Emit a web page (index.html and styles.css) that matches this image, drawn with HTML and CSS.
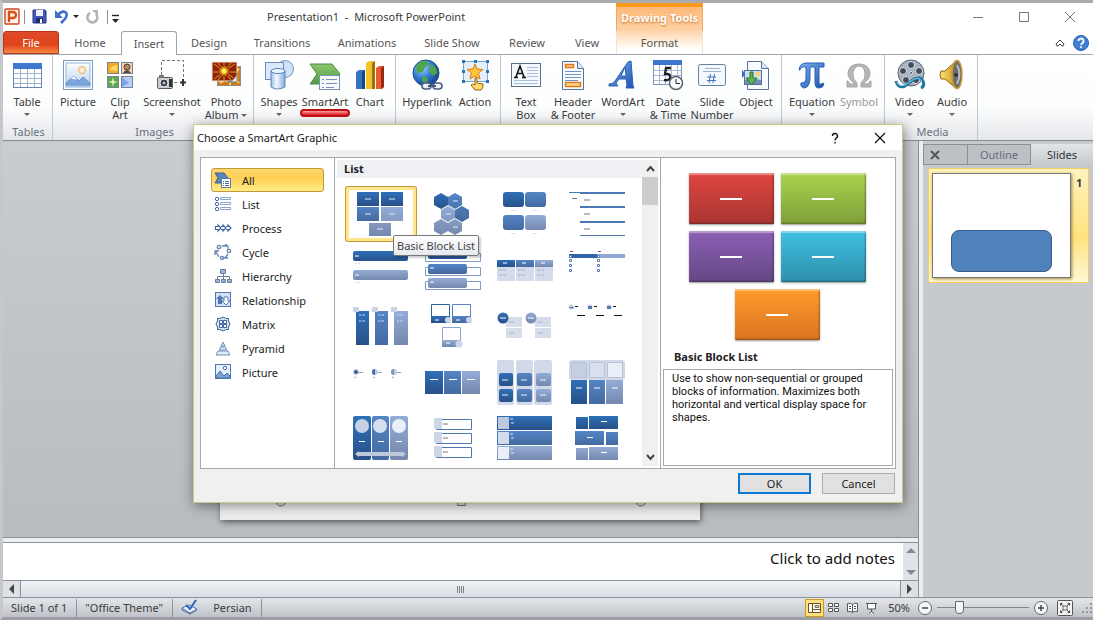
FILE: index.html
```html
<!DOCTYPE html>
<html lang="en">
<head>
<meta charset="utf-8">
<title>Presentation1 - Microsoft PowerPoint</title>
<link rel="stylesheet" href="styles.css">
</head>
<body>
<svg class="defs" width="0" height="0" aria-hidden="true">
  <defs>
    <linearGradient id="b1" x1="0" y1="0" x2="0" y2="1"><stop offset="0" stop-color="#2f70b8"/><stop offset="1" stop-color="#285089"/></linearGradient>
    <linearGradient id="b2" x1="0" y1="0" x2="0" y2="1"><stop offset="0" stop-color="#5485c6"/><stop offset="1" stop-color="#446a9f"/></linearGradient>
    <linearGradient id="b3" x1="0" y1="0" x2="0" y2="1"><stop offset="0" stop-color="#93acd8"/><stop offset="1" stop-color="#7588ad"/></linearGradient>
    <linearGradient id="sky" x1="0" y1="0" x2="0" y2="1"><stop offset="0" stop-color="#fdfeff"/><stop offset="1" stop-color="#b5d4f1"/></linearGradient>
    <linearGradient id="blue" x1="0" y1="0" x2="1" y2="1"><stop offset="0" stop-color="#7fb5f0"/><stop offset="1" stop-color="#1c4fae"/></linearGradient>
    <linearGradient id="green" x1="0" y1="0" x2="0" y2="1"><stop offset="0" stop-color="#8cc76c"/><stop offset="1" stop-color="#4f9a45"/></linearGradient>
    <linearGradient id="gold" x1="0" y1="0" x2="1" y2="0"><stop offset="0" stop-color="#ffe678"/><stop offset="1" stop-color="#c98b13"/></linearGradient>
    <linearGradient id="cyl" x1="0" y1="0" x2="1" y2="0"><stop offset="0" stop-color="#9dbfe8"/><stop offset=".4" stop-color="#f2f8ff"/><stop offset="1" stop-color="#86abdb"/></linearGradient>
    <radialGradient id="globe" cx=".35" cy=".3" r=".8"><stop offset="0" stop-color="#9fd6ff"/><stop offset=".5" stop-color="#2f79d0"/><stop offset="1" stop-color="#123a85"/></radialGradient>
    <radialGradient id="sun"><stop offset="0" stop-color="#ffe84a"/><stop offset=".5" stop-color="#e9911a"/><stop offset="1" stop-color="#8b2606"/></radialGradient>
  </defs>
</svg>
<div class="app">
  <header class="titlebar">
    <div class="quick">
      <svg width="116" height="20" viewBox="0 0 116 20" aria-hidden="true">
        <rect x="2" y="2" width="14" height="15" rx="1" fill="#fff3ec" stroke="#d0451b" stroke-width="1.4"/><path d="M6 15V5h4a3 3 0 0 1 0 6H7" fill="none" stroke="#d9501f" stroke-width="2.4"/>
        <path d="M21.500 3v14M104.500 3v14" stroke="#8d9299"/>
        <path d="M30 3h12l1 1v12H30z" fill="#4657b5" stroke="#27348b"/><rect x="33" y="3" width="7" height="6" fill="#eef1fb"/><rect x="33" y="11" width="7" height="5" fill="#222c66"/><rect x="37" y="12" width="2" height="4" fill="#fff"/>
        <path d="M55 8c5-6 12-3 7 4l-4 4" fill="none" stroke="#3f6fc4" stroke-width="2.6"/><path d="M52 3v8h8z" fill="#3f6fc4"/>
        <path d="M70 8h6l-3 3z" fill="#222"/>
        <path d="M87 6a5 5 0 1 0 6 1" fill="none" stroke="#b4b4b4" stroke-width="2.600"/><path d="M89 3h6v6z" fill="#b4b4b4"/>
        <path d="M109 8.500h7" stroke="#222" stroke-width="1.400"/><path d="M109 12h7l-3.500 4z" fill="#222"/>
      </svg>
    </div>
    <h1 class="title">Presentation1 &nbsp;-&nbsp; Microsoft PowerPoint</h1>
    <div class="context">Drawing Tools</div>
    <div class="winbtns">
      <button aria-label="Minimize"><svg width="12" height="12"><path d="M1 6.500h10" stroke="#777"/></svg></button>
      <button aria-label="Maximize"><svg width="12" height="12"><path d="M1.500 1.500h9v9h-9z" fill="none" stroke="#777"/></svg></button>
      <button aria-label="Close"><svg width="12" height="12"><path d="M1 1l10 10M11 1L1 11" stroke="#777"/></svg></button>
    </div>
  </header>
  <nav class="tabs">
    <button class="tab file">File</button>
    <button class="tab t62">Home</button>
    <button class="tab active">Insert</button>
    <button class="tab t64">Design</button>
    <button class="tab t82">Transitions</button>
    <button class="tab t88">Animations</button>
    <button class="tab t82">Slide Show</button>
    <button class="tab t68">Review</button>
    <button class="tab t50">View</button>
    <button class="tab format">Format</button>
    <div class="tabtools">
      <button aria-label="Minimize the ribbon"><svg width="12" height="12"><path d="M2 7l4-4 4 4-1 2H8L6 7 4 9H3z" fill="#fff" stroke="#444"/></svg></button>
      <button aria-label="Help"><svg width="18" height="18"><circle cx="9" cy="9" r="7.500" fill="#3f7fd6" stroke="#2a5db0"/><path d="M6.500 7a2.500 2.500 0 1 1 3.700 2.200Q9 10 9 11" fill="none" stroke="#fff" stroke-width="1.800"/><circle cx="9" cy="13" r="1.100" fill="#fff"/></svg></button>
    </div>
  </nav>
  <section class="ribbon" aria-label="Insert">
    <div class="group g-tables">
      <div class="items">
        <button class="item w44"><svg width="32" height="32"><rect x="2.500" y="4.500" width="28" height="24" fill="#fff" stroke="#6a86b3"/><rect x="2" y="4" width="29" height="6" fill="#3f78cf"/><path d="M3 14.500h27M3 19.500h27M3 24.500h27M9.500 10v18M16.500 10v18M23.500 10v18" stroke="#9fb2cf"/></svg><span>Table</span><i class="arrow"></i></button>
      </div>
      <div class="glabel">Tables</div>
    </div>
    <div class="group g-images">
      <div class="items">
        <button class="item w44"><svg width="32" height="32"><rect x="1.500" y="1.500" width="29" height="29" fill="#fff" stroke="#7d99be"/><rect x="4" y="4" width="24" height="24" fill="url(#sky)" stroke="#8db6e2"/><circle cx="20" cy="11" r="3.500" fill="#fff1d6" stroke="#e8a35a"/><path d="M4 24l8-7 5 5 4-4 7 6v2H4z" fill="#7ba7dc" stroke="#6b93c8"/><path d="M9 20l3-3 3 4-3-1z" fill="#fff"/></svg><span>Picture</span></button>
        <button class="item w40"><svg width="32" height="32"><rect x="3.500" y="3.500" width="11" height="11" fill="#f5a823" stroke="#78838f"/><path d="M5 11q4-5 8-5v6z" fill="#ffd964"/><rect x="17.500" y="3.500" width="11" height="11" fill="#f6d3b8" stroke="#78838f"/><circle cx="23" cy="8" r="3" fill="#c48152" stroke="#423f45"/><path d="M19 14q4-6 8 0z" fill="#58443e"/><rect x="3.500" y="17.500" width="11" height="11" fill="#5aa759" stroke="#78838f"/><path d="M9 18l1 4 4 1-4 1-1 4-1-4-4-1 4-1z" fill="#e5f3a8"/><rect x="17.500" y="17.500" width="11" height="11" fill="#b7cff6" stroke="#78838f"/><path d="M18 18l7 6-7 4z" fill="#7da5e6"/></svg><span>Clip<br>Art</span></button>
        <button class="item w64"><svg width="32" height="32"><path d="M5.500 16V1.500h22V20M18 23.500h4" fill="none" stroke="#6e757c" stroke-dasharray="3 2"/><path d="M24 23.500h6M27 20v7" stroke="#333" stroke-width="2"/><rect x="1.500" y="18.500" width="15" height="11" rx="1" fill="#c7cbd0" stroke="#555c63"/><rect x="3" y="16" width="5" height="3" fill="#777"/><circle cx="8" cy="24" r="4" fill="#383d45" stroke="#eee"/><circle cx="8" cy="24" r="1.500" fill="#a8c4e6"/><rect x="13" y="20" width="3" height="8" fill="#333"/></svg><span>Screenshot</span><i class="arrow"></i></button>
        <button class="item w44"><svg width="32" height="32"><rect x="7.500" y="7.500" width="23" height="19" fill="#cf7a16" stroke="#988"/><path d="M10 24l19-14M12 10l17 14M20 8v18" stroke="#f9d56d" stroke-width="2"/><rect x="2" y="3" width="25" height="19" fill="#8e2108" stroke="#f4e8d8"/><path d="M4 5l21 15M25 5L4 20M14 4v17M3 13h23M8 4l13 17M21 4L8 21" stroke="#e5a21c"/><circle cx="14" cy="12" r="6" fill="url(#sun)"/><circle cx="14" cy="12" r="2.500" fill="#ffee55"/><path d="M27 14v9h-9q7-1 9-9z" fill="#f5f5f5" stroke="#777"/></svg><span>Photo<br>Album <i class="arrow inline"></i></span></button>
      </div>
      <div class="glabel">Images</div>
    </div>
    <div class="group g-illus">
      <div class="items">
        <button class="item w48"><svg width="32" height="32"><circle cx="22" cy="10" r="8.500" fill="#cfe1f6" stroke="#7897c2"/><rect x="2.500" y="3.500" width="18" height="17" fill="#d9e8fa" stroke="#6d8dbb"/><path d="M8 12v16q6 4 14 0V12z" fill="url(#cyl)" stroke="#5f83b6"/><ellipse cx="15" cy="12" rx="7" ry="2.500" fill="#e7f2ff" stroke="#5f83b6"/></svg><span>Shapes</span><i class="arrow"></i></button>
        <button class="item w44"><svg width="32" height="32"><path d="M1 5h22l8 10-8 10H1l7-10z" fill="url(#green)" stroke="#4d8a48"/><rect x="10.500" y="16.500" width="20" height="14" fill="#f6faff" stroke="#7b93b4"/><path d="M17 20.500h11M17 24.500h11M17 28.500h8M13 20.500h2M13 24.500h2M13 28.500h2" stroke="#7890b6"/></svg><span>SmartArt</span><i class="redline"></i></button>
        <button class="item w46"><svg width="32" height="32"><path d="M2 13l3-2h6v19H2z" fill="#3277bd"/><path d="M8 13l3-2v19H8z" fill="#174b80"/><path d="M12 4l3-2h6v28h-9z" fill="#f4c42d"/><path d="M18 4l3-2v28h-3z" fill="#a66e08"/><path d="M22 9l3-2h5v21l-2 2h-6z" fill="#e75b31"/><path d="M27 9l3-2v21l-3 2z" fill="#9a2811"/></svg><span>Chart</span></button>
      </div>
    </div>
    <div class="group g-links">
      <div class="items">
        <button class="item w58"><svg width="32" height="32"><circle cx="15" cy="14" r="13" fill="url(#globe)" stroke="#1b4a85"/><path d="M5 7q5-6 11-5l2 3-4 3-2 5-6 1zM20 5q6 3 6 9l-4 3-4-5zM11 17l6 2-1 6q-6-1-5-8z" fill="#4fa54b"/><rect x="11" y="24" width="9" height="6" rx="3" fill="#eef3fa" stroke="#485d7e" stroke-width="1.600"/><rect x="22" y="24" width="9" height="6" rx="3" fill="#eef3fa" stroke="#485d7e" stroke-width="1.600"/><path d="M17 27h8" stroke="#485d7e" stroke-width="2"/></svg><span>Hyperlink</span></button>
        <button class="item w38"><svg width="32" height="32"><rect x="4.500" y="2.500" width="24" height="20" fill="#e4effc" stroke="#7aa6d4"/><path d="M3 1h3v3H3zM15 1h3v3h-3zM27 1h3v3h-3zM3 11h3v3H3zM27 11h3v3h-3zM3 21h3v3H3zM27 21h3v3h-3z" fill="#2377be"/><path d="M16 5l2 5 6 .5-4.500 3.500 1.500 6-5-3-5 3 1.500-6L8 10.500l6-.5z" fill="#ffc33c" stroke="#dd7c12"/><path d="M16 19q2-1 2 2v3l6 1v3l-2 3h-6l-4-5q1-2 4 0z" fill="#ffd96a" stroke="#99610c"/></svg><span>Action</span></button>
      </div>
    </div>
    <div class="group g-text">
      <div class="items">
        <button class="item w44"><svg width="32" height="32"><rect x="1.500" y="4.500" width="29" height="23" fill="#f5f9fe" stroke="#5e7189"/><path d="M6 18l4-11 4 11M7.500 14.500h5M4 18.500h4M12 18.500h4" stroke="#111" stroke-width="1.600" fill="none"/><path d="M17 8.500h11M17 11.500h11M17 14.500h11M17 17.500h11M4 21.500h24M4 24.500h24" stroke="#a7c0dd"/></svg><span>Text<br>Box</span></button>
        <button class="item w50"><svg width="32" height="32"><path d="M5.500 2.500h15l6 7v21h-21z" fill="#f9fcff" stroke="#51739f"/><path d="M20.500 2.500v7h6" fill="#dae8fa" stroke="#51739f"/><path d="M8.500 5.500h8v3h-8zM8.500 23.500h15v4h-15z" fill="#ffd69b" stroke="#e17715" stroke-width="1.500"/><path d="M8 12.500h16M8 15.500h16M8 18.500h16M8 21.500h13" stroke="#6f94c4"/></svg><span>Header<br>&amp; Footer</span></button>
        <button class="item w50"><svg width="32" height="32"><path d="M2 25q4 0 6-3L21 3l3-1 2 25 1 2h-8l1-3-1-6h-7q-4 4-2 6l1 1H2zM14 17h5l-1-9z" fill="url(#blue)" stroke="#2c62b5"/></svg><span>WordArt</span><i class="arrow"></i></button>
        <button class="item w40"><svg width="32" height="32"><rect x="1.500" y="1.500" width="28" height="24" fill="#fff" stroke="#8096b5"/><rect x="1" y="1" width="29" height="5" fill="#3c78cf"/><path d="M2 11.500h27M2 16.500h27M2 21.500h27M7.500 6v19M13.500 6v19M19.500 6v19M25.500 6v19" stroke="#a7b8d1"/><path d="M19 9h-5l-1 6q6-1 5 4-1 3-6 2" fill="none" stroke="#222" stroke-width="2.300"/><circle cx="24" cy="24" r="6.500" fill="#f9fbfd" stroke="#5c6670" stroke-width="1.500"/><path d="M24 20v4.500h4" fill="none" stroke="#222"/></svg><span>Date<br>&amp; Time</span></button>
        <button class="item w48"><svg width="32" height="32"><rect x="2.500" y="5.500" width="27" height="21" rx="2" fill="#f5f9fe" stroke="#6a7f9c"/><path d="M9 9.500h15M7 12.500h18" stroke="#9db5d4"/><path d="M14.500 15l-1.500 9M18.500 15l-1.500 9M11 18h9M11 21.500h9" stroke="#4273bb"/></svg><span>Slide<br>Number</span></button>
        <button class="item w40"><svg width="32" height="32"><path d="M7.500 2.500h14l7 7v21h-21z" fill="#f8fbff" stroke="#55749c"/><path d="M21.500 2.500v7h7" fill="#d7e6f9" stroke="#55749c"/><path d="M2 11l4 4-4 4z" fill="#2d6dcb"/><rect x="4.500" y="11.500" width="17" height="14" fill="#cfe0f6" stroke="#53739e"/><circle cx="18" cy="15" r="2.500" fill="#f3d27f"/><path d="M5 21l5-2 11 2v4H5z" fill="#6f8db0"/><path d="M10 13h3v6h4l-5.500 7L6 19h4z" fill="#5fb257" stroke="#25752a"/></svg><span>Object</span></button>
      </div>
    </div>
    <div class="group g-symbols">
      <div class="items">
        <button class="item w52"><svg width="32" height="32"><path d="M3 11q1-7 7-7h18v4h-5v15q0 4 4 1l1 1q-1 4-5 4-4 0-4-5V8h-5v12q-1 9-6 9-4-1-3-5 5 0 5-5V8Q5 7 4 11z" fill="url(#blue)" stroke="#2860b5"/></svg><span>Equation</span><i class="arrow"></i></button>
        <button class="item w42"><svg width="32" height="32"><path d="M4 22h1q1 3 3 3h4Q5 20 5 14 6 5 16 5t11 9q0 6-7 11h4q2 0 3-3h1v6H18v-4q5-4 4-10-1-7-6-7t-6 7q-1 6 4 10v4H4z" fill="#b4b6b9" stroke="#a4a4a4"/></svg><span class="off">Symbol</span></button>
      </div>
    </div>
    <div class="group g-media">
      <div class="items">
        <button class="item w43"><svg width="32" height="32"><circle cx="17" cy="14" r="13" fill="#a9b3be" stroke="#57626e"/><g fill="#3f4c5d" stroke="#dde3ea"><circle cx="17" cy="6" r="3.500"/><circle cx="9" cy="12" r="3.500"/><circle cx="25" cy="12" r="3.500"/><circle cx="12" cy="21" r="3.500"/><circle cx="22" cy="21" r="3.500"/><circle cx="17" cy="14" r="1.500"/></g><path d="M2 22q2 8 9 5l9-7q7-3 9 2t-2 7" fill="none" stroke="#2276a7" stroke-width="3"/><path d="M3 23q2 5 8 3l9-6q6-2 8 3" fill="none" stroke="#8bcdea"/></svg><span>Video</span><i class="arrow"></i></button>
        <button class="item w42"><svg width="32" height="32"><path d="M5 12h4L21 1v29L9 20H5q-2-4 0-8z" fill="url(#gold)" stroke="#8f620d"/><ellipse cx="21" cy="15.500" rx="5" ry="14" fill="#6b6d70" stroke="#c89a35" stroke-width="1.500"/><path d="M21 6q5 9 0 19" fill="none" stroke="#bbb" stroke-width="2"/><circle cx="20" cy="16" r="2" fill="#333"/></svg><span>Audio</span><i class="arrow"></i></button>
      </div>
      <div class="glabel">Media</div>
    </div>
  </section>
  <div class="workspace">
    <main class="editor">
      <div class="canvas"><div class="slide"><svg width="480" height="24"><g fill="#e8eef0" stroke="#6c7a82"><circle cx="61" cy="5" r="5"/><path d="M237.500 .5h8v9h-8z"/><circle cx="421" cy="5" r="5"/></g></svg></div></div>
      <div class="notes">
        <textarea class="notetext" aria-label="Notes" placeholder="Click to add notes"></textarea>
        <div class="nscroll"><button aria-label="Notes up"><i class="tri up"></i></button><button aria-label="Notes down"><i class="tri down"></i></button></div>
      </div>
      <div class="hscroll"><button aria-label="Scroll left"><i class="tri left"></i></button><div class="hthumb"><svg width="8" height="7"><path d="M.5 0v7M2.500 0v7M4.500 0v7M6.500 0v7" stroke="#7d8289"/></svg></div><button aria-label="Scroll right"><i class="tri right"></i></button></div>
    </main>
    <aside class="side">
      <div class="sidetabs">
        <button class="sclose" aria-label="Close pane"><svg width="10" height="10"><path d="M1 1l8 8M9 1L1 9" stroke="#555" stroke-width="2"/></svg></button>
        <button class="outline">Outline</button>
        <button class="slides">Slides</button>
      </div>
      <div class="card"><div class="mini"><div class="shape"></div></div><b>1</b></div>
    </aside>
  </div>
  <footer class="status">
    <span class="cell">Slide 1 of 1</span><span class="cell">"Office Theme"</span>
    <span class="cell lang"><svg width="18" height="16"><path d="M1 9l7-3 8 4-7 4z" fill="#eef3fb" stroke="#5571a8"/><path d="M1 9v2l8 4v-2M9 15l7-4" fill="none" stroke="#5571a8"/><path d="M5 6l4 4 6-9" fill="none" stroke="#2e62c0" stroke-width="2"/></svg>Persian</span>
    <div class="views">
      <button class="on" aria-label="Normal"><svg width="13" height="12"><path d="M.5 1.500h12v9H.5zM4.500 1.500v9M4.500 7.500h8" fill="#fff" stroke="#6b5617"/><path d="M7 3.500h4v2H7z" fill="#f6d06c" stroke="#777"/></svg></button>
      <button aria-label="Slide Sorter"><svg width="13" height="12"><path d="M1.500 1.500h4v3h-4zM7.500 1.500h4v3h-4zM1.500 6.500h4v3h-4zM7.500 6.500h4v3h-4z" fill="#fff" stroke="#555"/></svg></button>
      <button aria-label="Reading View"><svg width="13" height="12"><path d="M1.500 1.500q3-1 5 1 2-2 5-1v8q-3-1-5 1-2-2-5-1zM6.500 2v8M3 4.500h2M3 6.500h2M8 4.500h2M8 6.500h2" fill="#fff" stroke="#555"/></svg></button>
      <button aria-label="Slide Show"><svg width="13" height="12"><path d="M1 1.500h11M2.500 2v5h8V2M6.500 7v3M4 11.500l2.500-2 2.500 2" fill="#fff" stroke="#555"/></svg></button>
    </div>
    <span class="pct">50%</span>
    <button class="round" aria-label="Zoom out"><svg width="16" height="16"><circle cx="8" cy="8" r="6.500" fill="#f4f6f8" stroke="#656b72"/><path d="M5 8h6" stroke="#444" stroke-width="1.500"/></svg></button>
    <input class="zoom" type="range" min="0" max="100" value="22" aria-label="Zoom">
    <button class="round" aria-label="Zoom in"><svg width="16" height="16"><circle cx="8" cy="8" r="6.500" fill="#f4f6f8" stroke="#656b72"/><path d="M5 8h6M8 5v6" stroke="#444" stroke-width="1.500"/></svg></button>
    <button class="fit" aria-label="Fit slide"><svg width="16" height="16"><rect x=".5" y=".5" width="15" height="15" rx="1" fill="#f2f4f6" stroke="#555"/><path d="M3 3h3L3 6zM13 3v3l-3-3zM3 13v-3l3 3zM13 13h-3l3-3z" fill="#444"/><path d="M3.500 3.500l9 9M12.500 3.500l-9 9" stroke="#555"/><rect x="6" y="6" width="4" height="4" fill="#f2f4f6" stroke="#666"/></svg></button>
    <svg class="grip" width="12" height="12"><path d="M9 1h2v2H9zM9 5h2v2H9zM9 9h2v2H9zM5 5h2v2H5zM5 9h2v2H5zM1 9h2v2H1z" fill="#9298a0"/></svg>
  </footer>
</div>
<div class="dialog" role="dialog" aria-labelledby="dlg-title">
  <div class="dhead"><h2 id="dlg-title">Choose a SmartArt Graphic</h2><button aria-label="Help"><svg width="10" height="12"><path d="M2.500 4a2.500 2.500 0 1 1 3.700 2.200Q5 7 5 8.500M5 10v1.500" fill="none" stroke="#111" stroke-width="1.400"/></svg></button><button aria-label="Close dialog"><svg width="12" height="12"><path d="M1 1l10 10M11 1L1 11" stroke="#111" stroke-width="1.200"/></svg></button></div>
  <div class="dbody">
    <div class="cats">
      <button class="cat sel"><svg width="18" height="16"><path d="M1 1h9l4 5-4 5H1l3-5z" fill="#5e82ba" stroke="#3c619c"/><rect x="7.500" y="6.500" width="9" height="9" fill="#fff" stroke="#5e7eb1"/><path d="M9 9.500h1M11 9.500h4M9 11.500h1M11 11.500h4M9 13.500h1M11 13.500h4" stroke="#41679f"/></svg>All</button>
      <button class="cat"><svg width="18" height="16"><g fill="#fff" stroke="#4a6ca5"><circle cx="3" cy="3" r="1.700"/><circle cx="3" cy="8" r="1.700"/><circle cx="3" cy="13" r="1.700"/><path stroke="#88a3cc" d="M6.500 1.500h10v2h-10zM6.500 6.500h10v2h-10zM6.500 11.500h10v2h-10z"/></g></svg>List</button>
      <button class="cat"><svg width="18" height="16"><g fill="#fff" stroke="#4064a1" stroke-width="1.200"><path d="M1.500 6.500H4V5l3 3-3 3V9.500H1.500zM7 6.500h2V5l3 3-3 3V9.500H7M12 6.500h2V5l3 3-3 3V9.500h-2"/></g></svg>Process</button>
      <button class="cat"><svg width="18" height="16"><g fill="none" stroke="#6481b0" stroke-width="1.300"><circle cx="5" cy="3" r="1.700"/><circle cx="15" cy="7" r="1.700"/><circle cx="8" cy="14" r="1.500"/><path d="M8 2h5M11 0l3 2v3M14 10l-3 4M14 14h-4M5 13L2 8M1 11V7h4"/></g></svg>Cycle</button>
      <button class="cat"><svg width="18" height="16"><g fill="#9db3d5" stroke="#667f9f"><path d="M6.500 1.500h5v4h-5zM1.500 11.500h4v3h-4zM7.500 11.500h4v3h-4zM13.500 11.500h4v3h-4z"/><path fill="none" d="M9.500 6v5M3.500 11V8.500h12V11"/></g></svg>Hierarchy</button>
      <button class="cat"><svg width="18" height="16"><rect x="1.500" y=".5" width="15" height="14" fill="#d4e2f4" stroke="#5278b2"/><path d="M6 3l4 4H8v5H4V7H2z" fill="#5278b2"/><path d="M10 5h4v4h2l-4 4-4-4h2z" fill="#fff" stroke="#5278b2"/></svg>Relationship</button>
      <button class="cat"><svg width="18" height="16"><path d="M6 2.500q3-3 6 0h2.500V5q3 3 0 6v2.500H12q-3 3-6 0H3.500V11q-3-3 0-6V2.500z" fill="#d7e2f1" stroke="#3d619c"/><path d="M5.500 4.500h3v3h-3zM9.500 4.500h3v3h-3zM5.500 8.500h3v3h-3zM9.500 8.500h3v3h-3z" fill="#fff" stroke="#3d619c"/></svg>Matrix</button>
      <button class="cat"><svg width="18" height="16"><path d="M9 2l2 4H7zM6.500 7h5l1 3h-7zM4 11h10l2 4H2z" fill="#e3ebf6" stroke="#6e8fc0"/></svg>Pyramid</button>
      <button class="cat"><svg width="18" height="16"><rect x="1.500" y=".5" width="15" height="14" fill="#e5eefb" stroke="#5278b2"/><circle cx="11" cy="4" r="1.700" fill="#fff" stroke="#4570b2"/><path d="M2 12l4-5 4 5 3-3 3 3v2H2z" fill="#7e9fd0" stroke="#4570b2"/></svg>Picture</button>
    </div>
    <div class="gallery">
      <h3>List</h3>
      <div class="thumbs">
        <button class="thumb sel" aria-label="Basic Block List"><svg viewBox="0 0 72 56"><path d="M12 6h22v14H12zM36 6h22v14H36z" fill="url(#b1)"/><path d="M12 21h22v14H12zM36 21h22v14H36z" fill="url(#b2)"/><path d="M36 21h22v14H36zM24 37h22v13H24z" fill="url(#b3)"/><path d="M20 13h6M44 13h6M20 28h6M44 28h6M32 43h6" stroke="#e5ecf7"/></svg></button>
        <button class="thumb" aria-label="Alternating Hexagons"><svg viewBox="0 0 72 56"><path d="M24 7l7 4v8l-7 4-7-4v-8z" fill="url(#b1)"/><path d="M38 7l7 4v8l-7 4-7-4v-8zM45 20l7 4v8l-7 4-7-4v-8z" fill="url(#b2)"/><path d="M31 20l7 4v8l-7 4-7-4v-8zM24 33l7 4v8l-7 4-7-4v-8zM38 33l7 4v8l-7 4-7-4v-8z" fill="url(#b3)"/><path d="M36 15h5M29 28h5M36 41h5" stroke="#dfe8f5"/></svg></button>
        <button class="thumb" aria-label="Picture Caption List"><svg viewBox="0 0 72 56"><rect x="14" y="6" width="21" height="15" rx="3" fill="url(#b1)"/><rect x="36" y="6" width="21" height="15" rx="3" fill="url(#b2)"/><rect x="14" y="29" width="21" height="15" rx="3" fill="url(#b2)"/><rect x="36" y="29" width="21" height="15" rx="3" fill="url(#b3)"/><path d="M22 24.500h4M44 24.500h4M22 47.500h4M44 47.500h4" stroke="#dde"/></svg></button>
        <button class="thumb" aria-label="Lined List"><svg viewBox="0 0 72 56"><path d="M8 6h12v1H8zM19 6h45v2H19zM19 20h45v2H19zM19 35h45v2H19zM19 49h45v1H19z" fill="#4c78b3"/><path d="M23 14h6M23 28h6M23 43h6M11 12.500h5" stroke="#777"/></svg></button>

        <button class="thumb" aria-label="Vertical Bullet List"><svg viewBox="0 0 72 56"><rect x="8" y="9" width="55" height="10" rx="2" fill="url(#b1)"/><rect x="8" y="28" width="55" height="10" rx="2" fill="url(#b3)"/><path d="M10 14h4M10 33h4" stroke="#fff"/><path d="M10 21.500h6M10 40.500h6" stroke="#d7dce6" stroke-dasharray="2 1"/></svg></button>
        <button class="thumb" aria-label="Vertical Box List"><svg viewBox="0 0 72 56"><path d="M8.500 11.500h55v8h-55zM8.500 25.500h55v8h-55zM8.500 39.500h55v8h-55z" fill="#fff" stroke="#7f9bc7"/><rect x="11" y="7" width="39" height="10" rx="2" fill="url(#b1)"/><rect x="11" y="22" width="39" height="10" rx="2" fill="url(#b2)"/><rect x="11" y="36" width="39" height="10" rx="2" fill="url(#b3)"/><path d="M13 26h4M13 40h4" stroke="#fff"/></svg></button>
        <button class="thumb" aria-label="Horizontal Bullet List"><svg viewBox="0 0 72 56"><path d="M8 25h18v14H8zM27 25h18v14H27zM46 25h18v14H46z" fill="#d4dbea"/><path d="M8 18h18v7H8z" fill="url(#b1)"/><path d="M27 18h18v7H27z" fill="url(#b2)"/><path d="M46 18h18v7H46z" fill="url(#b3)"/><path d="M14 21h4M33 21h4M52 21h4" stroke="#fff"/><path d="M10 28h7M29 28h7M48 28h7M10 33h7M29 33h7M48 33h7" stroke="#a6b2c8" stroke-dasharray="3 1"/></svg></button>
        <button class="thumb" aria-label="Square Accent List"><svg viewBox="0 0 72 56"><path d="M8 12h28v4H8z" fill="#2f65a8"/><path d="M36 12h28v4H36z" fill="#8fa9d4"/><path d="M9 9.500h3M37 9.500h3" stroke="#666"/><path d="M8.500 13.500h2v2h-2zM8.500 17.500h2v2h-2zM8.500 22.500h2v2h-2zM8.500 27.500h2v2h-2zM36.500 13.500h2v2h-2zM36.500 17.500h2v2h-2zM36.500 22.500h2v2h-2zM36.500 27.500h2v2h-2z" fill="#fff" stroke="#5d7fb5"/></svg></button>

        <button class="thumb" aria-label="Picture Accent List"><svg viewBox="0 0 72 56"><path d="M11 13h13v34H11z" fill="url(#b1)"/><path d="M30 13h13v34H30z" fill="url(#b2)"/><path d="M49 13h14v34H49z" fill="url(#b3)"/><path d="M8 9h6v5H8zM27 9h6v5h-6zM46 9h6v5h-6z" fill="#cbd4e4"/><path d="M14 17h6M14 23h6M33 17h6M33 23h6M52 17h6M52 23h6" stroke="#c7d6ee" stroke-dasharray="2 1 3 1"/></svg></button>
        <button class="thumb" aria-label="Bending Picture Accent List"><svg viewBox="0 0 72 56"><path d="M14.500 6.500h18v18h-18z" fill="#fff" stroke="#30619f"/><path d="M35.500 6.500h18v18h-18z" fill="#fff" stroke="#5b83be"/><path d="M25.500 29.500h18v19h-18z" fill="#fff" stroke="#8fa6cf"/><path d="M14 18h19v7H14z" fill="url(#b1)"/><path d="M35 18h19v7H35z" fill="url(#b2)"/><path d="M25 42h19v7H25z" fill="url(#b3)"/><path d="M18 22h4M39 22h4M29 45h4" stroke="#fff"/><g fill="#cbd6e9"><circle cx="31" cy="22" r="3"/><circle cx="52" cy="22" r="3"/><circle cx="42" cy="46" r="3.500"/></g></svg></button>
        <button class="thumb" aria-label="Stacked List"><svg viewBox="0 0 72 56"><path d="M17 19h16v10H17zM17 30h16v10H17zM46 19h16v10H46zM46 30h16v10H46z" fill="#d5dcea"/><circle cx="14" cy="20" r="5.500" fill="url(#b1)"/><circle cx="42" cy="20" r="5.500" fill="url(#b3)"/><path d="M11 20h6M39 20h6" stroke="#fff"/><path d="M20 24h5M20 35h5M49 24h5M49 35h5" stroke="#a8b5ca"/></svg></button>
        <button class="thumb" aria-label="Increasing Circle Process"><svg viewBox="0 0 72 56"><g fill="#c2d0e6"><circle cx="10" cy="9" r="2.500"/><circle cx="29" cy="9" r="2.500"/><circle cx="48" cy="9" r="2.500"/></g><path d="M8 9h5q-1 3-5 0M27 8h4v3h-4M46 8h4v3h-4" fill="#567cae"/><path d="M14 8.500h3M33 8.500h3M52 8.500h3M16 17.500h8M35 17.500h8M53 17.500h8" stroke="#111"/></svg></button>

        <button class="thumb" aria-label="Pie Process"><svg viewBox="0 0 72 56"><g fill="#bdcae0"><circle cx="11" cy="18" r="3"/><circle cx="30" cy="18" r="3"/><circle cx="49" cy="18" r="3"/></g><circle cx="11" cy="18" r="1.800" fill="#244f89"/><path d="M30 15v6a3 3 0 0 1 0-6" fill="#456da8"/><path d="M49 15v6a3 3 0 0 1 0-6" fill="#7b94bd"/><path d="M14 18.500h4M33 18.500h4M52 18.500h4M9 24l2-1M28 24l2-1M47 24l2-1" stroke="#9ba3b0"/></svg></button>
        <button class="thumb" aria-label="Detailed Process"><svg viewBox="0 0 72 56"><path d="M8 17h18v23H8z" fill="url(#b1)"/><path d="M27 17h17v23H27z" fill="url(#b2)"/><path d="M45 17h18v23H45z" fill="url(#b3)"/><path d="M13 25.500h8M32 25.500h8M50 25.500h8" stroke="#fff"/></svg></button>
        <button class="thumb" aria-label="Grouped List"><svg viewBox="0 0 72 56"><g fill="#d2dae9"><rect x="8" y="6" width="17" height="45" rx="2"/><rect x="27" y="6" width="17" height="45" rx="2"/><rect x="45" y="6" width="18" height="45" rx="2"/></g><g fill="url(#b1)"><rect x="10" y="19" width="14" height="13" rx="2"/><rect x="10" y="35" width="14" height="13" rx="2"/></g><g fill="url(#b2)"><rect x="28" y="19" width="15" height="13" rx="2"/><rect x="28" y="35" width="15" height="13" rx="2"/></g><g fill="url(#b3)"><rect x="47" y="19" width="15" height="13" rx="2"/><rect x="47" y="35" width="15" height="13" rx="2"/></g><path d="M13 26h6M13 41h6M32 26h6M32 41h6M51 26h6M51 41h6" stroke="#e8effa"/></svg></button>
        <button class="thumb" aria-label="Horizontal Picture List"><svg viewBox="0 0 72 56"><rect x="8" y="6" width="56" height="20" rx="3" fill="#d1d9e8"/><path d="M10 26h16v24H10z" fill="url(#b1)"/><path d="M28 26h16v24H28z" fill="url(#b2)"/><path d="M45 26h17v24H45z" fill="url(#b3)"/><g stroke="#b7c2d7"><path d="M10.500 8.500h15v15h-15z" fill="#c5cfe2"/><path d="M28.500 8.500h15v15h-15z" fill="#d9dfec"/><path d="M46.500 8.500h15v15h-15z" fill="#eaeef6"/></g><path d="M15 34h6M33 34h6M51 34h6" stroke="#fff"/></svg></button>

        <button class="thumb" aria-label="Continuous Picture List"><svg viewBox="0 0 72 56"><rect x="8" y="6" width="18" height="44" rx="2" fill="url(#b1)"/><rect x="27" y="6" width="17" height="44" rx="2" fill="url(#b2)"/><rect x="45" y="6" width="18" height="44" rx="2" fill="url(#b3)"/><circle cx="17" cy="16" r="7" fill="#c5d0e4"/><circle cx="35" cy="16" r="7" fill="#d5deed"/><circle cx="54" cy="16" r="7" fill="#eaeff8"/><path d="M14 31.500h6M33 31.500h6M51 31.500h6" stroke="#fff"/><path d="M10 44l4-3v1h43v-1l4 3-4 3v-1H14v1z" fill="#bcc8dc"/></svg></button>
        <button class="thumb" aria-label="Vertical Picture List"><svg viewBox="0 0 72 56"><path d="M19.500 9.500h35v10h-35zM19.500 23.500h35v10h-35zM19.500 37.500h35v10h-35z" fill="#fff" stroke="#4f78b3"/><path d="M17 8h8v11h-8zM17 22h8v11h-8zM17 36h8v11h-8z" fill="#ccd6e7"/><path d="M26 14h5M26 28h5M26 42h5" stroke="#777"/></svg></button>
        <button class="thumb" aria-label="Vertical Picture Accent List"><svg viewBox="0 0 72 56"><path d="M8 6h55v14H8z" fill="url(#b1)"/><path d="M8 21h55v14H8z" fill="url(#b2)"/><path d="M8 36h55v14H8z" fill="url(#b3)"/><path d="M9 7h11v12H9z" fill="#bcc9df"/><path d="M9 22h11v12H9z" fill="#d2dbea"/><path d="M9 37h11v12H9z" fill="#e9eef7"/><path d="M21 9h3M22 13h3M21 24h3M22 28h3M21 39h3M22 43h3" stroke="#dae5f6"/></svg></button>
        <button class="thumb" aria-label="Vertical Block List"><svg viewBox="0 0 72 56"><path d="M15 7h12v12H15zM28 6h29v13H28z" fill="url(#b1)"/><path d="M14 21h29v14H14zM45 22h12v13H45z" fill="url(#b2)"/><path d="M15 38h12v12H15zM28 37h29v13H28z" fill="url(#b3)"/><path d="M40 11.500h6M26 27.500h6M40 42.500h6" stroke="#fff"/></svg></button>
      </div>
      <span class="tip" role="tooltip">Basic Block List</span>
    </div>
    <div class="gscroll"><button aria-label="Scroll up"><svg width="9" height="7"><path d="M1 6l3.500-4L8 6" fill="none" stroke="#444" stroke-width="2"/></svg></button><div class="gthumb"></div><button aria-label="Scroll down"><svg width="9" height="7"><path d="M1 1l3.500 4L8 1" fill="none" stroke="#444" stroke-width="2"/></svg></button></div>
    <div class="preview">
      <div class="blocks"><i class="blk red"></i><i class="blk lime"></i><i class="blk purple"></i><i class="blk cyan"></i><i class="blk orange"></i></div>
      <h3>Basic Block List</h3>
      <p>Use to show non-sequential or grouped blocks of information. Maximizes both horizontal and vertical display space for shapes.</p>
    </div>
  </div>
  <div class="dfoot"><button class="ok">OK</button><button>Cancel</button></div>
</div>
</body>
</html>
```
FILE: styles.css
```css
* { box-sizing: border-box; }
body { margin: 0; height: 100vh; overflow: hidden; font: 11px/13px "Noto Sans", "Open Sans", sans-serif; color: #3b3b3b; background: #d9dadc; }
button { font: inherit; color: inherit; background: none; border: 0; padding: 0; }
h1, h2, h3, p { margin: 0; font-size: inherit; font-weight: normal; }
.defs { position: absolute; }
svg { display: block; flex: none; }

.app { height: 100vh; display: flex; flex-direction: column; border: solid #8f9297; border-width: 3px 0 3px 3px; border-top-color: #a9abae; border-left-color: #c5c7ca; border-bottom-color: #9a9da1; background: #fff; }

.titlebar { display: flex; height: 28px; flex: none; }
.quick { width: 264px; padding-top: 4px; }
.title { width: 349px; line-height: 27px; white-space: nowrap; }
.context { width: 87px; border: 1px solid #f3a95c; border-top: 4px solid #f79a1c; border-bottom: 0; background: linear-gradient(#fdb877, #ffd2a6); color: #fff; font-weight: bold; line-height: 22px; text-align: center; text-shadow: 0 1px 2px #c0712c; white-space: nowrap; }
.winbtns { display: flex; margin-left: auto; }
.winbtns button { width: 46px; display: grid; place-items: center; }

.tabs { display: flex; height: 24px; flex: none; border-bottom: 1px solid #9fa5ad; }
.tab { height: 23px; width: 56px; color: #555; white-space: nowrap; }
.tab.t50 { width: 52px; } .tab.t62 { width: 62px; } .tab.t64 { width: 64px; } .tab.t68 { width: 68px; } .tab.t82 { width: 82px; } .tab.t88 { width: 88px; }
.tab.file { color: #fff; border-radius: 3px 3px 0 0; border: 1px solid #b9351a; background: linear-gradient(#dd4a2a, #e0431a 60%, #f58a45); }
.tab.active { height: 24px; border: 1px solid #9fa5ad; border-bottom: 0; border-radius: 3px 3px 0 0; background: #fff; }
.tab.format { width: 87px; margin-left: 3px; border: solid #fbe0c6; border-width: 0 1px; background: linear-gradient(#ffd5ad, #fff 80%); }
.tabtools { margin-left: auto; display: flex; align-items: center; gap: 6px; padding-right: 3px; }

.ribbon { display: flex; flex: none; height: 86px; background: linear-gradient(#fff, #fcfdfd 60%, #e4e6ea); border-bottom: 1px solid #868b92; }
.group { display: flex; flex-direction: column; border-right: 1px solid #c3c7cd; }
.g-tables { width: 50px; padding-left: 2px; } .g-images { width: 201px; padding-left: 3px; } .g-illus { width: 142px; padding-left: 1px; }
.g-links { width: 105px; padding-left: 2px; } .g-text { width: 281px; padding-left: 3px; } .g-symbols { width: 103px; padding-left: 4px; } .g-media { width: 93px; padding-left: 3px; }
.items { display: flex; flex: 1; }
.item { display: flex; flex-direction: column; align-items: center; padding-top: 4px; white-space: nowrap; text-align: center; }
.item span { padding-top: 4px; }
.w38 { width: 38px; } .w40 { width: 40px; } .w42 { width: 42px; } .w43 { width: 43px; } .w44 { width: 44px; } .w46 { width: 46px; } .w48 { width: 48px; } .w50 { width: 50px; } .w52 { width: 52px; } .w58 { width: 58px; } .w64 { width: 64px; }
.arrow { border: 3px solid transparent; border-top-color: #666; border-bottom: 0; margin-top: 5px; }
.arrow.inline { display: inline-block; margin: 0 0 2px; }
.redline { width: 50px; height: 8px; margin-top: 1px; border-radius: 4px; border: 2px solid #c00f17; background: linear-gradient(#fba0a4, #e01a20); }
.off { color: #999; }
.glabel { height: 15px; text-align: center; color: #6a717b; }

.workspace { flex: 1; display: flex; min-height: 0; background: #c3c7cb; }
.editor { flex: 1; display: flex; flex-direction: column; border-right: 1px solid #8b9097; }
.canvas { flex: 1; min-height: 0; display: flex; align-items: flex-end; padding: 0 0 17px 217px; background: linear-gradient(#c9cdd1, #b8bcc1); }
.slide { width: 480px; height: 360px; flex: none; display: flex; align-items: flex-end; background: linear-gradient(#fff 94%, #ececee); box-shadow: 1px 2px 6px #555; }
.notes { display: flex; height: 43px; border-top: 1px solid #8b9097; background: #fff; box-shadow: inset 0 4px #eceef1, inset 0 5px #8b9097; padding-top: 5px; }
.notetext { flex: 1; resize: none; border: 0; padding: 6px 8px 0 0; font: 15px/18px "Noto Sans", sans-serif; text-align: right; background: none; overflow: hidden; }
.notetext::placeholder { color: #111; }
.nscroll { width: 15px; background: #dfe2e7; display: flex; flex-direction: column; justify-content: space-between; align-items: center; padding: 5px 0; }
.nscroll button, .hscroll button { display: grid; place-items: center; }
.tri { border: 5px solid transparent; display: block; }
.tri.up { border-bottom-color: #858a91; border-top: 0; } .tri.down { border-top-color: #858a91; border-bottom: 0; }
.tri.left { border-right-color: #444; border-left: 0; } .tri.right { border-left-color: #444; border-right: 0; }
.hscroll { display: flex; height: 17px; border: solid #8b9097; border-width: 1px 0 0; background: #dde1e6; }
.hscroll button { width: 17px; }
.hthumb { flex: 1; display: grid; place-items: center; border: solid #8b9097; border-width: 0 1px; background: linear-gradient(#f0f3f6, #d9dde4); }
.side { width: 174px; border-left: 4px solid #eceef1; background: #c7cacd; padding-top: 3px; }
.sidetabs { display: flex; height: 21px; color: #666c75; border-left: 1px solid #8b9097; }
.sidetabs button { border: solid #8b9097; border-width: 1px 1px 1px 0; background: #bdc1c6; }
.sclose { width: 44px; padding-left: 6px; }
.outline { width: 63px; }
.sidetabs .slides { flex: 1; border: 0; background: linear-gradient(#e2e5e8, #c7cacd); color: #333; }
.card { display: flex; gap: 5px; margin: 3px 4px 0 5px; padding: 4px 3px; border: 1px solid #f1cf62; border-radius: 2px; background: linear-gradient(#fff3bd, #ffe27f 60%, #fff8d5); }
.mini { width: 139px; height: 105px; border: 1px solid #777; background: #fff; padding: 56px 18px 5px; box-shadow: 1px 1px 3px #a08a45; }
.shape { height: 42px; border: 1px solid #385d8a; border-radius: 8px; background: #4f81bd; }
.card b { line-height: 20px; }

.status { display: flex; flex: none; align-items: center; height: 20px; background: linear-gradient(#e3e6e9, #bfc3c9); border-top: 1px solid #8b9097; }
.cell { height: 18px; line-height: 18px; padding: 0 9px 0 8px; border-right: 1px solid #8f949b; white-space: nowrap; }
.lang { display: flex; gap: 14px; }
.views { display: flex; margin-left: auto; }
.views button { width: 19px; height: 18px; display: grid; place-items: center; }
.views .on { background: #ffe07a; border: 1px solid #c79a2b; }
.pct { padding: 0 7px; }
.zoom { appearance: none; width: 92px; height: 16px; margin: 0 4px; background: linear-gradient(#80868e, #80868e) center/100% 1px no-repeat; }
.zoom::-webkit-slider-thumb { appearance: none; width: 9px; height: 13px; border: 1px solid #666; border-radius: 1px 1px 5px 5px; background: #f3f5f7; }
.fit { margin-left: 8px; }
.grip { margin-left: 8px; }

.dialog { position: absolute; left: 193px; top: 124px; width: 710px; background: #f0f0f0; border: 1px solid #c9c98a; box-shadow: 1px 3px 12px #0007; color: #222; }
.dhead { display: flex; align-items: center; height: 25px; background: #fff; padding-left: 3px; }
.dhead h2 { flex: 1; }
.dhead button { width: 45px; display: grid; place-items: center; }
.dbody { display: flex; height: 312px; margin: 7px 6px 0; border: 1px solid #a5a8ad; background: #fff; }
.cats { width: 134px; padding: 10px 10px 0; border-right: 1px solid #a5a8ad; }
.cat { display: flex; align-items: center; gap: 10px; width: 100%; height: 24px; padding: 0 3px; }
.cat.sel { border: 1px solid #c29b3f; border-radius: 3px; background: linear-gradient(#ffd76b, #ffcf55 40%, #ffee82); padding: 0 2px; }
.gallery { position: relative; flex: 1; padding: 2px 0 0 2px; }
.gallery h3 { height: 18px; line-height: 18px; padding-left: 7px; background: #eff1f5; font-weight: bold; }
.thumbs { display: grid; grid-template-columns: repeat(4, 72px); padding: 8px 0 0 8px; grid-auto-rows: 56px; }
.thumb { position: relative; }
.thumb.sel { box-shadow: inset 0 0 0 1px #c6983c, inset 0 0 0 4px #ffe58c; border-radius: 3px; }
.tip { position: absolute; left: 58px; top: 77px; padding: 3px; border: 1px solid #777; border-radius: 2px; background: linear-gradient(#fff, #e6e8f1); box-shadow: 2px 2px 2px #0003; white-space: nowrap; color: #444; }
.gscroll { width: 16px; margin: 2px 2px 2px 0; background: #f0f0f0; display: flex; flex-direction: column; }
.gscroll button { height: 17px; display: grid; place-items: center; }
.gthumb { height: 28px; margin-bottom: auto; background: #cdcdcd; }
.preview { width: 235px; border-left: 1px solid #a5a8ad; padding: 15px 2px 2px; display: flex; flex-direction: column; }
.blocks { display: flex; flex-wrap: wrap; justify-content: center; gap: 7px; padding: 0 14px 0 12px; }
.blk { width: 85px; height: 51px; border-radius: 1px; box-shadow: inset 0 2px 1px #fff6, inset -1px -1px 2px #0005, 0 1px 2px #0006; display: grid; place-items: center; }
.blk::after { content: ""; width: 22px; height: 2px; background: #fff; }
.red { background: linear-gradient(#e04641, #a83532); } .lime { background: linear-gradient(#a9d44c, #7f9f3b); } .purple { background: linear-gradient(#8b60b5, #664785); } .cyan { background: linear-gradient(#3fc0e3, #2f90ab); } .orange { background: linear-gradient(#ff9c2c, #d97420); }
.preview h3 { font-weight: bold; padding: 10px 11px 5px; line-height: 14px; }
.preview p { flex: 1; border: 1px solid #a5a8ad; padding: 2px 8px; color: #111; font-family: Roboto, "Noto Sans", sans-serif; }
.dfoot { display: flex; justify-content: flex-end; gap: 11px; padding: 4px 7px 8px; }
.dfoot button { width: 73px; height: 21px; border: 1px solid #adadad; background: #e1e1e1; }
.dfoot .ok { border: 2px solid #0c78d4; }
```
